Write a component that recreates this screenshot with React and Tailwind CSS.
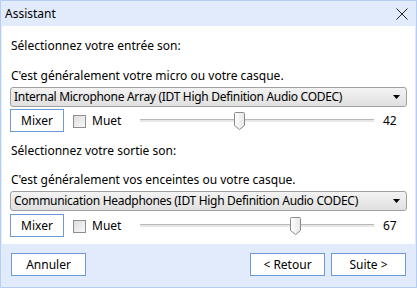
import React from "react";

const font = { fontFamily: '"Noto Sans", "Segoe UI", sans-serif' };

function Thumb() {
  return (
    <svg width="11" height="18" viewBox="0 0 11 18" className="absolute top-[-7px]">
      <defs>
        <linearGradient id="tg" x1="0" y1="0" x2="1" y2="0">
          <stop offset="0" stopColor="#ffffff" />
          <stop offset="1" stopColor="#e6e6e6" />
        </linearGradient>
      </defs>
      <path d="M1.5 0.5 H9.5 Q10.5 0.5 10.5 1.5 V13.5 L5.5 17.5 L0.5 13.5 V1.5 Q0.5 0.5 1.5 0.5 Z" fill="url(#tg)" stroke="#8a8a8a" />
    </svg>
  );
}

function Slider({ value }) {
  const left = (value / 100) * 224;
  return (
    <div className="relative w-[234px] h-[4px] mt-[1px] shrink-0">
      <div className="h-[1px] bg-[#b9b9b9]" />
      <div className="h-[2px] bg-[#e7e7e7]" />
      <div className="absolute" style={{ left: left + "px", top: 0 }}>
        <Thumb />
      </div>
    </div>
  );
}

function Dropdown({ text }) {
  return (
    <div className="mx-[8px] h-[20px] rounded-[3px] border border-[#a0a0a0] bg-gradient-to-b from-[#f3f3f3] to-[#e0e0e0] flex items-center pl-[3px] pr-[6px] text-[12px] text-black">
      <span className="flex-1 whitespace-nowrap tracking-[-0.3px]">{text}</span>
      <svg width="7" height="4" viewBox="0 0 7 4"><path d="M0 0 H7 L3.5 4 Z" fill="#000" /></svg>
    </div>
  );
}

function ControlRow({ value }) {
  return (
    <div className="flex items-center h-[23px] ml-[8px]">
      <div className="w-[54px] h-[23px] shrink-0 border border-[#6f98d6] bg-white flex items-center justify-center text-[12px] text-black">Mixer</div>
      <div className="ml-[9px] w-[13px] h-[13px] shrink-0 border border-[#8e8e8e] bg-gradient-to-br from-[#dedede] to-[#f8f8f8] mt-[2px]" />
      <span className="ml-[6px] w-[48px] shrink-0 text-[12px] text-black mt-[1px]">Muet</span>
      <Slider value={value} />
      <span className="ml-[9px] text-[12px] text-black mt-[1px]">{value}</span>
    </div>
  );
}

export default function App() {
  return (
    <div style={font} className="w-[417px] h-[288px] border border-[#b3cef1] bg-[#e1ebfb] flex flex-col px-[1px] overflow-hidden">
      <div className="h-[25px] flex items-center justify-between pl-[3px] pr-[7px]">
        <span className="text-[12px] text-black">Assistant</span>
        <svg width="12" height="12" viewBox="0 0 12 12"><path d="M0.5 0.5 L11.5 11.5 M11.5 0.5 L0.5 11.5" stroke="#222" strokeWidth="1" /></svg>
      </div>
      <div className="h-[218px] bg-white flex flex-col text-[12px] text-black">
        <div className="ml-[9px] mt-[12px] h-[16px] leading-[16px]">Sélectionnez votre entrée son:</div>
        <div className="ml-[9px] mt-[14px] h-[16px] leading-[16px]">C'est généralement votre micro ou votre casque.</div>
        <div className="mt-[3px]"><Dropdown text="Internal Microphone Array (IDT High Definition Audio CODEC)" /></div>
        <div className="mt-[2px]"><ControlRow value={42} /></div>
        <div className="ml-[9px] mt-[11px] h-[16px] leading-[16px]">Sélectionnez votre sortie son:</div>
        <div className="ml-[9px] mt-[13px] h-[16px] leading-[16px]">C'est généralement vos enceintes ou votre casque.</div>
        <div className="mt-[3px]"><Dropdown text="Communication Headphones (IDT High Definition Audio CODEC)" /></div>
        <div className="mt-[3px]"><ControlRow value={67} /></div>
      </div>
      <div className="flex-1 flex items-start pt-[9px] px-[9px]">
        <div className="w-[75px] h-[23px] border border-[#6f98d6] bg-white flex items-center justify-center text-[12px]">Annuler</div>
        <div className="flex-1" />
        <div className="w-[75px] h-[23px] border border-[#6f98d6] bg-white flex items-center justify-center text-[12px]">&lt; Retour</div>
        <div className="w-[75px] h-[23px] ml-[6px] border border-[#6f98d6] bg-white flex items-center justify-center text-[12px]">Suite &gt;</div>
      </div>
    </div>
  );
}
